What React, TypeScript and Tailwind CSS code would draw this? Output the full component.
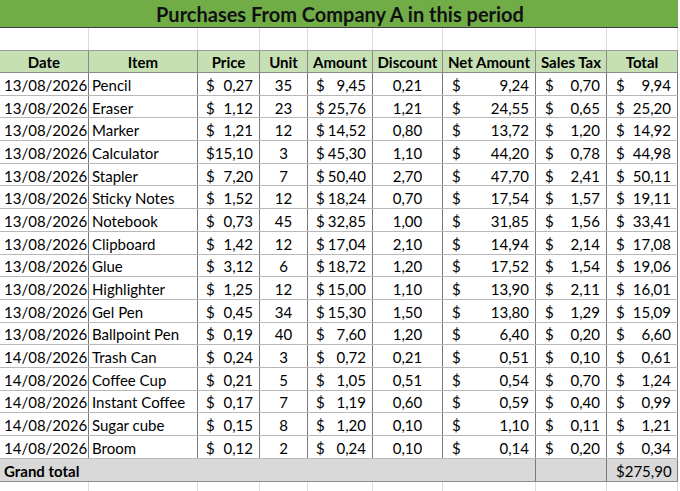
import React from "react";

type Row = [string, string, string, string, string, string, string, string, string];

const rows: Row[] = [
  ["13/08/2026", "Pencil", "0,27", "35", "9,45", "0,21", "9,24", "0,70", "9,94"],
  ["13/08/2026", "Eraser", "1,12", "23", "25,76", "1,21", "24,55", "0,65", "25,20"],
  ["13/08/2026", "Marker", "1,21", "12", "14,52", "0,80", "13,72", "1,20", "14,92"],
  ["13/08/2026", "Calculator", "15,10", "3", "45,30", "1,10", "44,20", "0,78", "44,98"],
  ["13/08/2026", "Stapler", "7,20", "7", "50,40", "2,70", "47,70", "2,41", "50,11"],
  ["13/08/2026", "Sticky Notes", "1,52", "12", "18,24", "0,70", "17,54", "1,57", "19,11"],
  ["13/08/2026", "Notebook", "0,73", "45", "32,85", "1,00", "31,85", "1,56", "33,41"],
  ["13/08/2026", "Clipboard", "1,42", "12", "17,04", "2,10", "14,94", "2,14", "17,08"],
  ["13/08/2026", "Glue", "3,12", "6", "18,72", "1,20", "17,52", "1,54", "19,06"],
  ["13/08/2026", "Highlighter", "1,25", "12", "15,00", "1,10", "13,90", "2,11", "16,01"],
  ["13/08/2026", "Gel Pen", "0,45", "34", "15,30", "1,50", "13,80", "1,29", "15,09"],
  ["13/08/2026", "Ballpoint Pen", "0,19", "40", "7,60", "1,20", "6,40", "0,20", "6,60"],
  ["14/08/2026", "Trash Can", "0,24", "3", "0,72", "0,21", "0,51", "0,10", "0,61"],
  ["14/08/2026", "Coffee Cup", "0,21", "5", "1,05", "0,51", "0,54", "0,70", "1,24"],
  ["14/08/2026", "Instant Coffee", "0,17", "7", "1,19", "0,60", "0,59", "0,40", "0,99"],
  ["14/08/2026", "Sugar cube", "0,15", "8", "1,20", "0,10", "1,10", "0,11", "1,21"],
  ["14/08/2026", "Broom", "0,12", "2", "0,24", "0,10", "0,14", "0,20", "0,34"],
];

const cols = "grid grid-cols-[89px_109px_62px_48px_65px_70px_93px_71px_71px]";

function Money({ v, pl }: { v: string; pl: string }) {
  return (
    <div className={`flex justify-between items-center border-r border-[#7a7a7a] pr-[6px] pt-[3px] ${pl}`}>
      <span>$</span>
      <span>{v}</span>
    </div>
  );
}

export default function App() {
  return (
    <div
      className="w-[680px] h-[491px] overflow-hidden bg-white text-black text-[15px] leading-none"
      style={{ fontFamily: "Lato, 'Open Sans', sans-serif" }}
    >
      <div className="w-[678px]">
        {/* Title */}
        <div className="h-[28px] bg-[#70ad47] border-b border-[#3f3f3f] flex items-center justify-center pt-[1px]">
          <span className="font-bold text-[20px] text-[#111] relative left-[1px]">
            Purchases From Company A in this period
          </span>
        </div>
        {/* Blank row */}
        <div className={`${cols} h-[23px] border-b border-[#9a9a9a]`}>
          {Array.from({ length: 9 }).map((_, i) => (
            <div key={i} className="border-r border-[#dcdcdc]" />
          ))}
        </div>
        {/* Header */}
        <div className={`${cols} h-[22px] bg-[#c6e0b4] font-bold border-b border-[#8a8a8a]`}>
          {["Date", "Item", "Price", "Unit", "Amount", "Discount", "Net Amount", "Sales Tax", "Total"].map((h) => (
            <div key={h} className="flex items-center justify-center pt-[2px] border-r border-[#8a8a8a] whitespace-nowrap">
              {h}
            </div>
          ))}
        </div>
        {/* Data */}
        {rows.map((r, i) => (
          <div key={i} className={`${cols} h-[22.7px] border-b border-[#b8b8b8]`}>
            <div className="flex items-center pl-[4px] pt-[3px] border-r border-[#7a7a7a] whitespace-nowrap">{r[0]}</div>
            <div className="flex items-center pl-[3px] pt-[3px] border-r border-[#7a7a7a] whitespace-nowrap">{r[1]}</div>
            <Money v={r[2]} pl="pl-[8px]" />
            <div className="flex items-center justify-center pt-[3px] border-r border-[#7a7a7a]">{r[3]}</div>
            <Money v={r[4]} pl="pl-[8px]" />
            <div className="flex items-center justify-center pt-[3px] border-r border-[#7a7a7a]">{r[5]}</div>
            <Money v={r[6]} pl="pl-[9px]" />
            <Money v={r[7]} pl="pl-[9px]" />
            <Money v={r[8]} pl="pl-[9px]" />
          </div>
        ))}
        {/* Grand total */}
        <div className="grid grid-cols-[536px_71px_71px] h-[23px] bg-[#d9d9d9] border-b border-[#8a8a8a]">
          <div className="flex items-center pl-[4px] pt-[3px] font-bold border-r border-[#7a7a7a]">Grand total</div>
          <div className="border-r border-[#7a7a7a]" />
          <div className="flex items-center justify-between pl-[9px] pr-[6px] pt-[3px] border-r border-[#7a7a7a]">
            <span>$</span>
            <span>275,90</span>
          </div>
        </div>
        {/* Trailing blank */}
        <div className={`${cols} h-[9px]`}>
          {Array.from({ length: 9 }).map((_, i) => (
            <div key={i} className="border-r border-[#dcdcdc]" />
          ))}
        </div>
      </div>
    </div>
  );
}
